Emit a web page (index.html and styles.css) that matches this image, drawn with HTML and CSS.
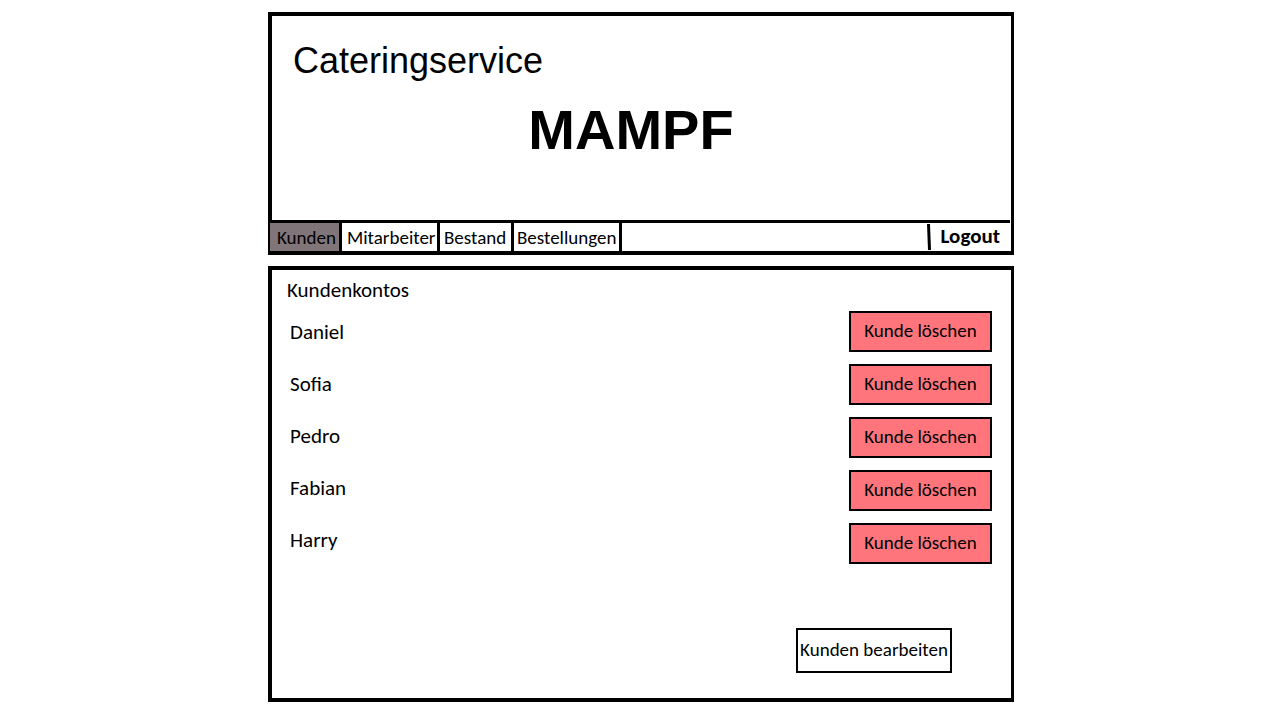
FILE: index.html
```html
<!DOCTYPE html>
<html lang="de">
<head>
<meta charset="utf-8">
<meta name="viewport" content="width=device-width, initial-scale=1">
<title>Cateringservice MAMPF</title>
<link rel="stylesheet" href="styles.css">
</head>
<body>
<div class="page">
  <header class="panel">
    <div class="banner">
      <p class="tagline">Cateringservice</p>
      <h1 class="brand">MAMPF</h1>
    </div>
    <nav class="nav">
      <a class="tab tab-active" href="#kunden" aria-current="page">Kunden</a>
      <a class="tab" href="#mitarbeiter">Mitarbeiter</a>
      <a class="tab" href="#bestand">Bestand</a>
      <a class="tab" href="#bestellungen">Bestellungen</a>
      <svg class="divider" viewBox="0 0 5 26" aria-hidden="true"><path d="M0 0H3L4 26H1Z"/></svg>
      <a class="logout" href="#logout">Logout</a>
    </nav>
  </header>
  <main class="panel content">
    <h2 class="title">Kundenkontos</h2>
    <div class="accounts">
      <ul class="names">
        <li id="k1">Daniel</li>
        <li id="k2">Sofia</li>
        <li id="k3">Pedro</li>
        <li id="k4">Fabian</li>
        <li id="k5">Harry</li>
      </ul>
      <div class="actions">
        <button class="button delete" type="button" aria-describedby="k1">Kunde löschen</button>
        <button class="button delete" type="button" aria-describedby="k2">Kunde löschen</button>
        <button class="button delete" type="button" aria-describedby="k3">Kunde löschen</button>
        <button class="button delete" type="button" aria-describedby="k4">Kunde löschen</button>
        <button class="button delete" type="button" aria-describedby="k5">Kunde löschen</button>
      </div>
    </div>
    <div class="footer">
      <button class="button edit" type="button">Kunden bearbeiten</button>
    </div>
  </main>
</div>
</body>
</html>
```
FILE: styles.css
```css
* { box-sizing: border-box; }
body {
  margin: 0;
  background: #fff;
  color: #000;
  font-family: Calibri, Carlito, Lato, sans-serif;
  font-size: 19px;
}
.page {
  display: flex;
  flex-direction: column;
  gap: 11px;
  max-width: 748px;
  margin: 0 auto;
  padding: 12px 0 18px 2px;
}
.panel {
  border: 4px solid #000;
  border-right-width: 3px;
}
.banner {
  padding: 24px 21px 60px;
}
.tagline {
  margin: 0;
  font: 36px/42px "Liberation Sans", Arial, sans-serif;
}
.brand {
  margin: 18px 0 0;
  padding-right: 21px;
  text-align: center;
  font: bold 56px/60px "Britannic Bold", "Liberation Sans", Arial, sans-serif;
}
.nav {
  display: flex;
  align-items: stretch;
  height: 31px;
  margin-right: 1px;
  border-top: 3px solid #000;
}
.tab {
  flex: 0 0 98px;
  padding-left: 5px;
  border-right: 3px solid #000;
  color: inherit;
  line-height: 30px;
  text-decoration: none;
}
.tab:nth-child(3) { flex-basis: 74px; padding-left: 4px; }
.tab:nth-child(4) { flex-basis: 108px; padding-left: 3px; }
.tab-active {
  flex-basis: 70px;
  background: #807578;
  box-shadow: -2px 0 #807578;
}
.divider {
  width: 5px;
  height: 26px;
  margin: 1px 9px 0 auto;
}
.logout {
  padding-right: 10px;
  color: inherit;
  font-size: 21px;
  font-weight: bold;
  line-height: 27px;
  text-decoration: none;
}
.content {
  padding: 8px 19px 25px 15px;
}
.title {
  margin: 0;
  font-size: 21px;
  font-weight: normal;
  line-height: 24px;
}
.accounts {
  display: flex;
  justify-content: space-between;
  align-items: flex-start;
  padding-top: 4px;
}
.names {
  margin: 0;
  padding: 0 0 0 3px;
  list-style: none;
  font-size: 21px;
  line-height: 52px;
}
.actions {
  display: grid;
  gap: 12px;
  width: 143px;
  padding-top: 5px;
}
.button {
  padding: 0 0 2px;
  border: 2px solid #000;
  background: #fff;
  color: inherit;
  font: inherit;
  cursor: pointer;
}
.delete {
  height: 41px;
  background: #ff757b;
}
.footer {
  display: flex;
  justify-content: flex-end;
  padding: 62px 40px 0 0;
}
.edit {
  width: 156px;
  height: 45px;
  white-space: nowrap;
}
```
